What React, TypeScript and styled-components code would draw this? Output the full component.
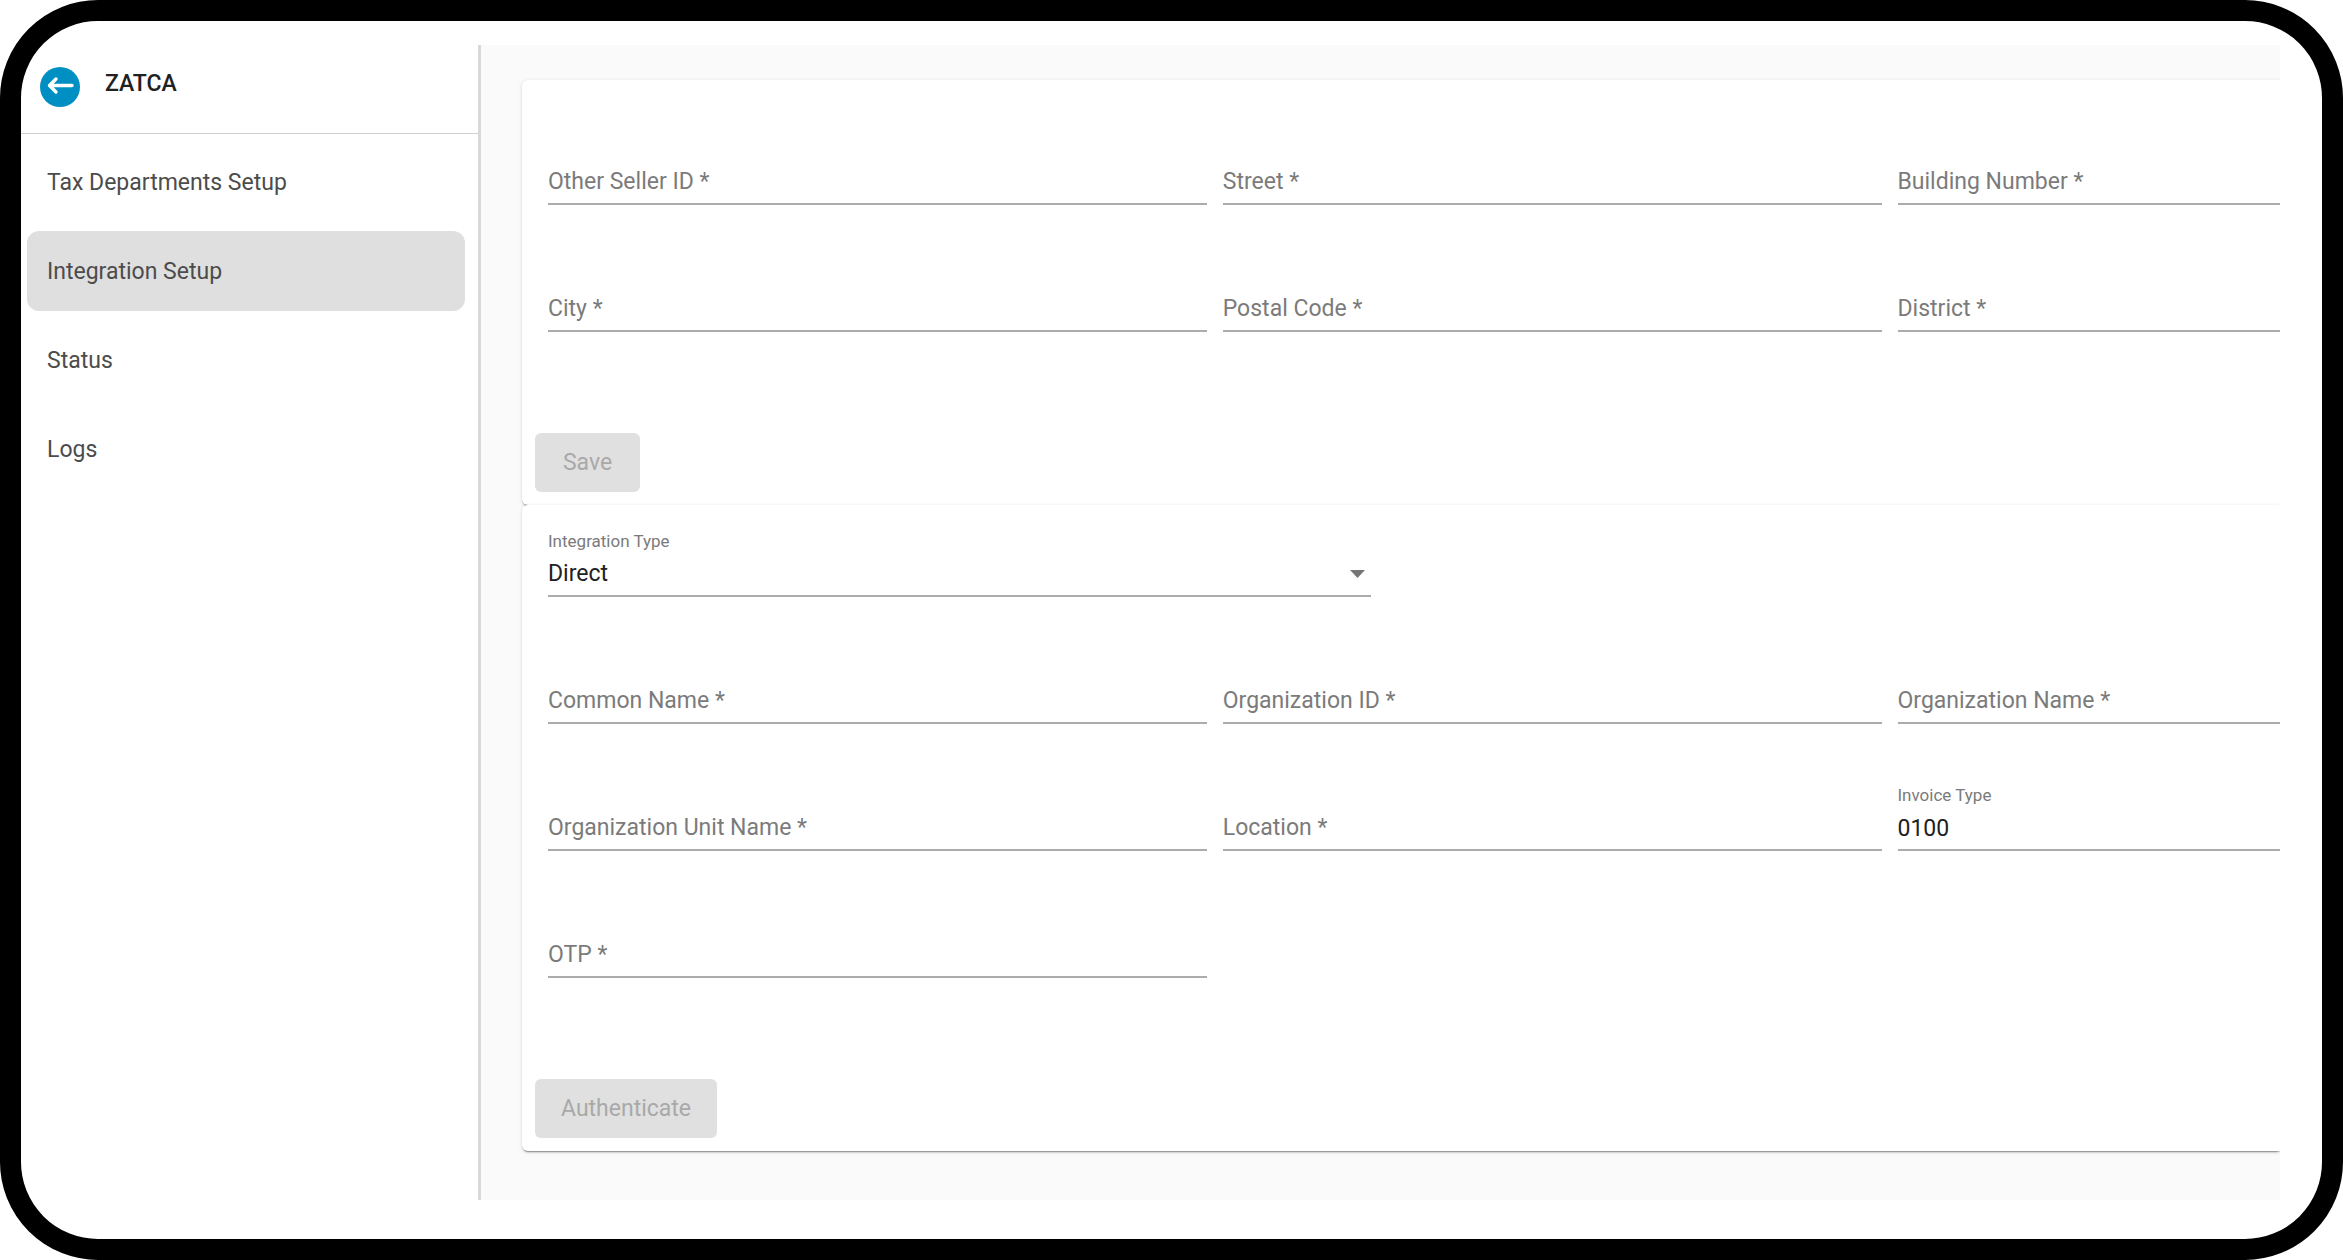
import React, { useId } from "react";
import styled, { createGlobalStyle } from "styled-components";

const GlobalStyle = createGlobalStyle`
  *, *::before, *::after { box-sizing: border-box; }
  body {
    margin: 0;
    background: #ffffff;
    font-family: Roboto, "Liberation Sans", sans-serif;
    font-size: 23px;
    line-height: 30px;
    color: #212121;
  }
`;

const Frame = styled.div`
  display: flex;
  min-height: 100vh;
  padding: 24px 42px 39px 0;
  border: 21px solid #000000;
  border-radius: 98px;
  background: #ffffff;
`;

const Sidebar = styled.aside`
  flex: 0 0 460px;
  border-right: 3px solid #d8d8d8;
`;

const SidebarHeader = styled.header`
  display: flex;
  align-items: flex-start;
  gap: 25px;
  height: 89px;
  padding: 22px 19px 0;
  border-bottom: 1px solid #d0d0d0;
`;

const BackButton = styled.button`
  display: block;
  width: 40px;
  height: 40px;
  padding: 0;
  border: 0;
  border-radius: 50%;
  background: #008fc3;
  cursor: pointer;

  svg { display: block; }
`;

const Title = styled.h1`
  margin: 2px 0 0;
  font-size: 23px;
  line-height: 30px;
  font-weight: 500;
`;

const Nav = styled.nav`
  display: flex;
  flex-direction: column;
  gap: 9px;
  padding: 8px 13px 0 6px;
`;

const NavLink = styled.a<{ $active?: boolean }>`
  display: flex;
  align-items: center;
  height: 80px;
  padding: 2px 20px 0;
  border-radius: 12px;
  background: ${(p) => (p.$active ? "#dfdfdf" : "transparent")};
  color: #4c4c4c;
  text-decoration: none;
`;

const Main = styled.main`
  flex: 1;
  min-width: 0;
  padding: 35px 0 0 41px;
  background: #fafafa;
  overflow: hidden;
`;

const Card = styled.form<{ $top: number }>`
  display: flex;
  flex-direction: column;
  align-items: flex-start;
  padding: ${(p) => p.$top}px 0 13px;
  border-radius: 6px 0 0 6px;
  background: #ffffff;
  box-shadow:
    0 3px 2px -2px rgba(0, 0, 0, 0.3),
    0 1px 1px 0 rgba(0, 0, 0, 0.16),
    0 1px 4px 0 rgba(0, 0, 0, 0.12);
`;

const Fields = styled.div`
  display: grid;
  grid-template-columns: 31fr 31fr 18fr;
  column-gap: 16px;
  row-gap: 59px;
  width: 100%;
  padding-left: 26px;
`;

const SelectRow = styled.div`
  width: 48.3%;
  padding-left: 26px;
  margin-bottom: 59px;
`;

const FieldBox = styled.div`
  display: grid;
  grid-template-columns: 1fr;
  grid-template-rows: 24px 38px;
  row-gap: 6px;
`;

const Label = styled.label<{ $raised: boolean }>`
  grid-area: ${(p) => (p.$raised ? "1 / 1" : "2 / 1")};
  font-size: ${(p) => (p.$raised ? 17 : 23)}px;
  line-height: ${(p) => (p.$raised ? 24 : 30)}px;
  color: #7b7b7b;
  pointer-events: none;
`;

const Input = styled.input`
  grid-area: 2 / 1;
  width: 100%;
  height: 38px;
  padding: 0 0 6px;
  border: 0;
  border-bottom: 2px solid #acacac;
  border-radius: 0;
  outline: 0;
  background: transparent;
  font: inherit;
  color: #212121;
`;

const Select = styled(Input).attrs({ as: "select" })`
  appearance: none;
`;

const Caret = styled.svg`
  grid-area: 2 / 1;
  justify-self: end;
  margin: 11px 6px 0 0;
  pointer-events: none;
`;

const ActionButton = styled.button`
  min-width: 105px;
  height: 59px;
  margin: 101px 0 0 13px;
  padding: 0 26px;
  border: 0;
  border-radius: 6px;
  background: #e0e0e0;
  font: inherit;
  color: #a9a9a9;
`;

function Field({ label, value }: { label: string; value?: string }) {
  const id = useId();
  return (
    <FieldBox>
      <Label htmlFor={id} $raised={Boolean(value)}>{label}</Label>
      <Input id={id} type="text" defaultValue={value} />
    </FieldBox>
  );
}

function SelectField({ label, options }: { label: string; options: string[] }) {
  const id = useId();
  return (
    <FieldBox>
      <Label htmlFor={id} $raised>{label}</Label>
      <Select id={id}>
        {options.map((o) => <option key={o}>{o}</option>)}
      </Select>
      <Caret width="15" height="8" viewBox="0 0 15 8" aria-hidden="true">
        <path d="M0 0h15L7.5 8z" fill="#757575" />
      </Caret>
    </FieldBox>
  );
}

const navItems = ["Tax Departments Setup", "Integration Setup", "Status", "Logs"];

const addressFields = [
  "Other Seller ID *", "Street *", "Building Number *",
  "City *", "Postal Code *", "District *",
];

const certificateFields: { label: string; value?: string }[] = [
  { label: "Common Name *" },
  { label: "Organization ID *" },
  { label: "Organization Name *" },
  { label: "Organization Unit Name *" },
  { label: "Location *" },
  { label: "Invoice Type", value: "0100" },
  { label: "OTP *" },
];

export default function App() {
  return (
    <>
      <GlobalStyle />
      <Frame>
        <Sidebar>
          <SidebarHeader>
            <BackButton type="button" aria-label="Back">
              <svg width="40" height="40" viewBox="0 0 40 40" fill="none" stroke="#ffffff" strokeWidth="3.4" strokeLinecap="round" strokeLinejoin="round" aria-hidden="true">
                <path d="M32 18.5H9.5M16 12L9.5 18.5L16 25" />
              </svg>
            </BackButton>
            <Title>ZATCA</Title>
          </SidebarHeader>
          <Nav>
            {navItems.map((item) => (
              <NavLink key={item} href="#" $active={item === "Integration Setup"}>{item}</NavLink>
            ))}
          </Nav>
        </Sidebar>
        <Main>
          <Card $top={57}>
            <Fields>
              {addressFields.map((label) => <Field key={label} label={label} />)}
            </Fields>
            <ActionButton type="button" disabled>Save</ActionButton>
          </Card>
          <Card $top={24}>
            <SelectRow>
              <SelectField label="Integration Type" options={["Direct"]} />
            </SelectRow>
            <Fields>
              {certificateFields.map((f) => <Field key={f.label} {...f} />)}
            </Fields>
            <ActionButton type="button" disabled>Authenticate</ActionButton>
          </Card>
        </Main>
      </Frame>
    </>
  );
}
